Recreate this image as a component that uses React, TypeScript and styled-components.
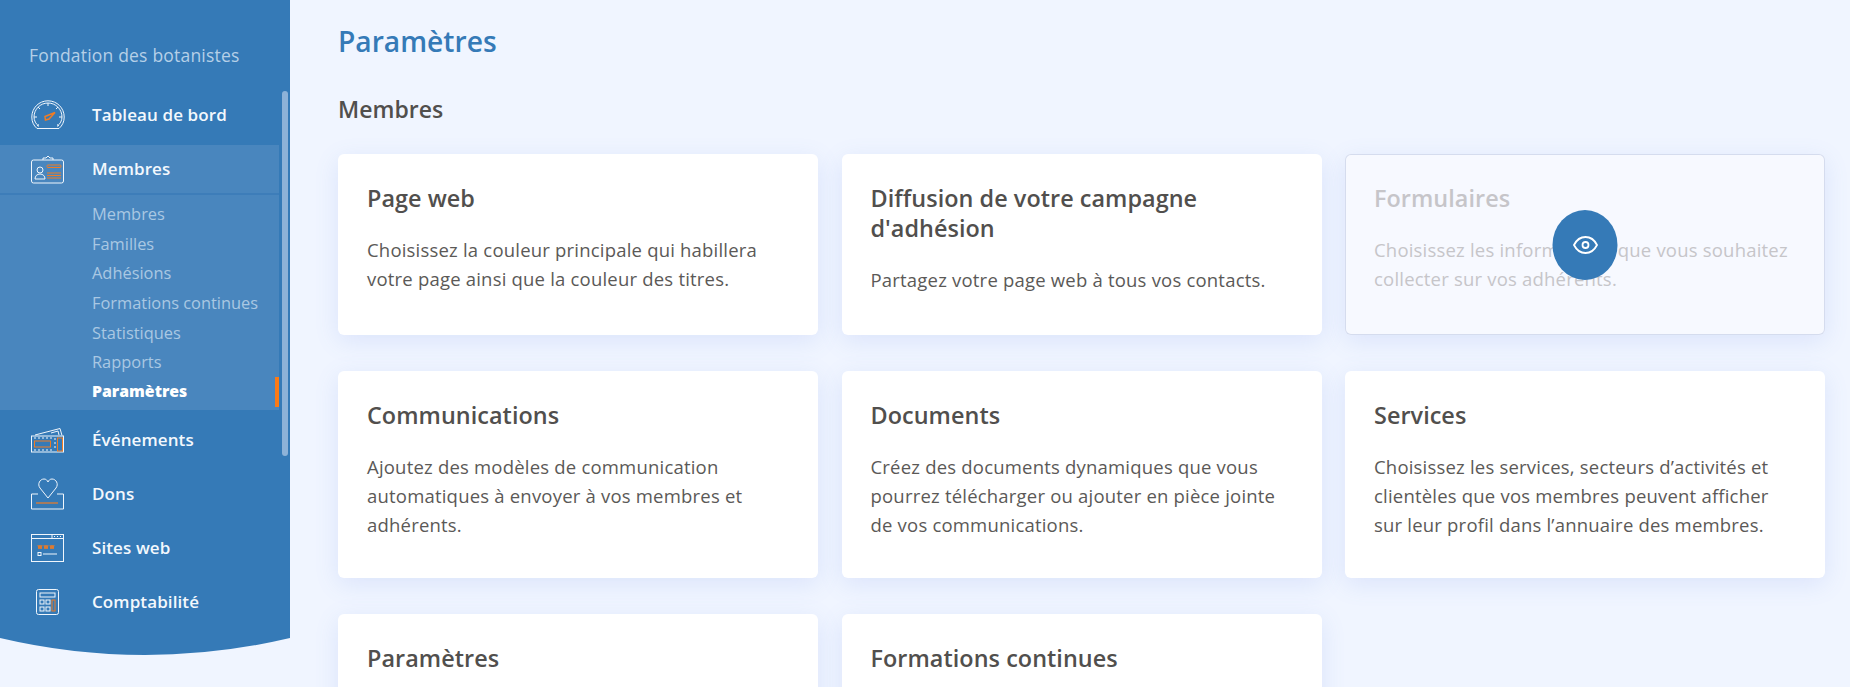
import React from "react";
import styled, { createGlobalStyle } from "styled-components";

const Global = createGlobalStyle`
  html, body { margin: 0; height: 100%; overflow: hidden; }
  body { background: #f0f5ff; font-family: "Open Sans", "Lato", sans-serif; }
  #root { height: 100%; }
`;
const Page = styled.div`display: flex; height: 687px; overflow: hidden;`;
const Sidebar = styled.aside`
  position: relative; flex: 0 0 290px; height: 656px; background: #357ab7; overflow: hidden;
  clip-path: path("M0 0H290V638Q145 672 0 638Z"); padding-top: 45px; box-sizing: border-box;
`;
const Org = styled.div`color: #b5d0e8; font-size: 17.500px; letter-spacing: .2px; font-weight: 500; padding-left: 29px; line-height: 20px; margin-bottom: 26px;`;
const Scrollbar = styled.div`position: absolute; right: 2px; top: 91px; width: 6px; height: 365px; border-radius: 3px; background: #8db2d8;`;
const Nav = styled.nav`width: 279px;`;
const Item = styled.div<{ $open?: boolean }>`
  display: flex; align-items: center; height: 48px; margin-bottom: ${p => (p.$open ? 0 : 6)}px;
  background: ${p => (p.$open ? "#4986be" : "transparent")};
`;
const IconBox = styled.div`width: 92px; padding-left: 3px; display: flex; justify-content: center; box-sizing: border-box; svg { display: block; }`;
const Label = styled.span`color: #f3f8fd; font-size: 17px; letter-spacing: .1px; font-weight: 600; padding-bottom: 2px;`;
const Sub = styled.div`background: #4986be; padding: 4px 0 0 92px; height: 217px; box-sizing: border-box; margin-bottom: 6px; border-top: 2px solid #3d7db9;`;
const SubItem = styled.div<{ $active?: boolean }>`
  position: relative; height: 29.67px; line-height: 29.67px; font-size: ${p => (p.$active ? 15.8 : 16.4)}px;
  color: ${p => (p.$active ? "#fff" : "#a9c8e3")}; font-weight: ${p => (p.$active ? 800 : 500)};
  ${p => p.$active && `&::after { content: ""; position: absolute; right: 0; top: 0; width: 4px; height: 30px; background: #fb7a16; }`}
`;
const Main = styled.main`flex: 1; padding: 24px 0 0 48px; min-width: 0;`;
const Title = styled.h1`margin: 0; color: #357ab7; font-size: 28.200px; font-weight: 600; line-height: 34px;`;
const Section = styled.h2`margin: 36px 0 30px; color: #514f4d; font-size: 23px; font-weight: 600; line-height: 30px;`;
const Grid = styled.div`display: grid; grid-template-columns: repeat(3, 480px); gap: 36px 23.500px; grid-auto-rows: max-content;`;
const Card = styled.div<{ $h: number; $faded?: boolean }>`
  position: relative; box-sizing: border-box; height: ${p => p.$h}px; border-radius: 6px; padding: 29px 29px;
  background: ${p => (p.$faded ? "#f7f9ff" : "#fff")};
  box-shadow: ${p => (p.$faded ? "inset 0 0 0 1px #d5dcee, " : "")}0 6px 24px rgba(90, 130, 230, .14);
`;
const CardTitle = styled.h3<{ $faded?: boolean }>`margin: 0 0 22px; font-size: 23.400px; letter-spacing: .05px; line-height: 30px; font-weight: 600; color: ${p => (p.$faded ? "#c6c5c9" : "#514f4d")};`;
const CardText = styled.p<{ $faded?: boolean }>`margin: 0; font-size: 18.500px; letter-spacing: .2px; line-height: 29px; color: ${p => (p.$faded ? "#c6c5c9" : "#5b5957")};`;
const Eye = styled.div`position: absolute; left: 50%; top: 50%; transform: translate(-50%, -50%); width: 65px; height: 70px; border-radius: 50%; background: #357ab7; display: flex; align-items: center; justify-content: center;`;

const O = "#f07c24", W = "#f0f6fc";
const Gauge = () => (
  <svg width="34" height="30" viewBox="0 0 34 30" fill="none" stroke={W} strokeWidth="1">
    <path d="M6 28.500C2.500 25.500 .8 21.500 .8 17 .8 8 8 .8 17 .8S33.200 8 33.200 17c0 4.500-1.700 8.500-5.200 11.500Z" />
    <path d="M8 26.500C4.800 24 3 20.500 3 17 3 9.300 9.300 3 17 3s14 6.300 14 14c0 3.500-1.800 7-5 9.500" />
    <path d="M17 3v3M7 7l2 2M27 7l-2 2M3 17h3M31 17h-3M6 26l2-1.500M28 26l-2-1.500" />
    <path d="M14 16.500l10-4-6 6.500-3.500 1Z" stroke={O} strokeWidth="1.500" />
  </svg>
);
const Badge = () => (
  <svg width="34" height="29" viewBox="0 0 34 29" fill="none" stroke={W} strokeWidth="1">
    <rect x=".5" y="5" width="32" height="23" rx="2" />
    <path d="M12 5V3h3l2-2 2 2h3v2" />
    <circle cx="9" cy="15" r="3" />
    <path d="M4 24c0-3 2-5 5-5s5 2 5 5Z" />
    <rect x="16" y="10" width="14" height="2.500" rx="1" stroke={O} />
    <path d="M16 18h14M16 20.500h14M16 23h14" stroke={O} />
  </svg>
);
const Ticket = () => (
  <svg width="34" height="25" viewBox="0 0 34 25" fill="none" stroke={W} strokeWidth="1">
    <path d="M4 7 29 .5l2 7M20 5l7-2 1 4" />
    <rect x=".5" y="8" width="32" height="16" />
    <path d="M3 10h18M3 22h18M24 10v12" strokeDasharray="2 2" />
    <rect x="3.500" y="13" width="16" height="6" stroke={O} />
    <rect x="26.500" y="10" width="5" height="13" stroke={O} />
  </svg>
);
const Heart = () => (
  <svg width="34" height="32" viewBox="0 0 34 32" fill="none" stroke={W} strokeWidth="1">
    <path d="M7 16H.5v15h32V16H26" />
    <path d="M17 20 9 10C6 6 9 1 13 1c2 0 3 1 4 3 1-2 2-3 4-3 4 0 7 5 4 9Z" />
    <path d="M5 25h22" stroke={O} strokeWidth="1.200" />
  </svg>
);
const Www = () => (
  <svg width="34" height="29" viewBox="0 0 34 29" fill="none" stroke={W} strokeWidth="1">
    <rect x=".5" y=".5" width="32" height="27" />
    <path d="M.5 4.500h32M21 .5v4M23 2.500h1M26 2.500h1M29 2.500h1" />
    <path d="M7 11l1 4 1-4 1 4 1-4M13 11l1 4 1-4 1 4 1-4M19 11l1 4 1-4 1 4 1-4" stroke={O} />
    <rect x="7" y="18.500" width="3" height="3" />
    <path d="M12 20h14" />
  </svg>
);
const Calc = () => (
  <svg width="24" height="26" viewBox="0 0 24 26" fill="none" stroke={W} strokeWidth="1">
    <rect x=".5" y=".5" width="22" height="25" rx="2" />
    <rect x="4" y="4" width="15" height="4" />
    <rect x="4" y="11" width="4" height="4" />
    <rect x="10" y="11" width="4" height="4" />
    <rect x="4" y="18" width="4" height="4" />
    <rect x="10" y="18" width="4" height="4" />
    <rect x="16" y="11" width="3" height="11" stroke={O} />
  </svg>
);
const EyeIcon = () => (
  <svg width="26" height="20" viewBox="0 0 26 20" fill="none" stroke="#fff" strokeWidth="1.800">
    <path d="M1.500 10C4 5 8 2 13 2s9 3 11.500 8C22 15 18 18 13 18S4 15 1.500 10Z" />
    <circle cx="13" cy="10" r="3" />
  </svg>
);

const cards: { t: string; d: string; h: number; faded?: boolean }[] = [
  { t: "Page web", d: "Choisissez la couleur principale qui habillera votre page ainsi que la couleur des titres.", h: 181 },
  { t: "Diffusion de votre campagne d'adhésion", d: "Partagez votre page web à tous vos contacts.", h: 181 },
  { t: "Formulaires", d: "Choisissez les informations que vous souhaitez collecter sur vos adhérents.", h: 181, faded: true },
  { t: "Communications", d: "Ajoutez des modèles de communication automatiques à envoyer à vos membres et adhérents.", h: 207 },
  { t: "Documents", d: "Créez des documents dynamiques que vous pourrez télécharger ou ajouter en pièce jointe de vos communications.", h: 207 },
  { t: "Services", d: "Choisissez les services, secteurs d’activités et clientèles que vos membres peuvent afficher sur leur profil dans l’annuaire des membres.", h: 207 },
  { t: "Paramètres", d: "", h: 181 },
  { t: "Formations continues", d: "", h: 181 },
];
const subs = ["Membres", "Familles", "Adhésions", "Formations continues", "Statistiques", "Rapports"];

export default function App() {
  return (
    <Page>
      <Global />
      <Sidebar>
        <Org>Fondation des botanistes</Org>
        <Scrollbar />
        <Nav>
          <Item><IconBox><Gauge /></IconBox><Label>Tableau de bord</Label></Item>
          <Item $open><IconBox><Badge /></IconBox><Label>Membres</Label></Item>
          <Sub>
            {subs.map(s => <SubItem key={s}>{s}</SubItem>)}
            <SubItem $active>Paramètres</SubItem>
          </Sub>
          <Item><IconBox><Ticket /></IconBox><Label>Événements</Label></Item>
          <Item><IconBox><Heart /></IconBox><Label>Dons</Label></Item>
          <Item><IconBox><Www /></IconBox><Label>Sites web</Label></Item>
          <Item><IconBox><Calc /></IconBox><Label>Comptabilité</Label></Item>
        </Nav>
      </Sidebar>
      <Main>
        <Title>Paramètres</Title>
        <Section>Membres</Section>
        <Grid>
          {cards.map(c => (
            <Card key={c.t} $h={c.h} $faded={c.faded}>
              <CardTitle $faded={c.faded}>{c.t}</CardTitle>
              {c.d && <CardText $faded={c.faded}>{c.d}</CardText>}
              {c.faded && <Eye><EyeIcon /></Eye>}
            </Card>
          ))}
        </Grid>
      </Main>
    </Page>
  );
}
